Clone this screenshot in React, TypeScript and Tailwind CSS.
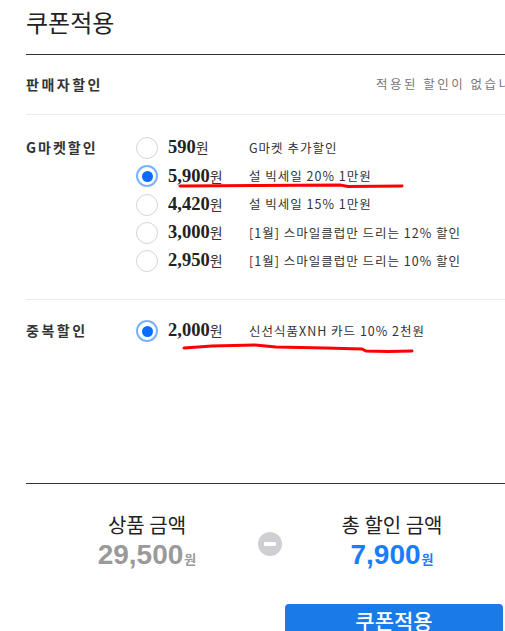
import React from "react";

const KR = { fontFamily: '"Noto Sans CJK KR", "Noto Sans", sans-serif' };

type Row = { amount: string; desc: string; checked?: boolean };

const gmarket: Row[] = [
  { amount: "590", desc: "G마켓 추가할인" },
  { amount: "5,900", desc: "설 빅세일 20% 1만원", checked: true },
  { amount: "4,420", desc: "설 빅세일 15% 1만원" },
  { amount: "3,000", desc: "[1월] 스마일클럽만 드리는 12% 할인" },
  { amount: "2,950", desc: "[1월] 스마일클럽만 드리는 10% 할인" },
];

function Radio({ checked }: { checked?: boolean }) {
  if (checked) {
    return (
      <span className="w-[22px] h-[22px] rounded-full border-[2px] border-[#7ab2ff] bg-white flex items-center justify-center shrink-0">
        <span className="w-[11px] h-[11px] rounded-full bg-[#0a6cff]" />
      </span>
    );
  }
  return <span className="w-[22px] h-[22px] rounded-full border border-[#d4d4d4] bg-white shrink-0" />;
}

function OptionRow({ r }: { r: Row }) {
  return (
    <div className="h-[28.25px] flex items-center whitespace-nowrap">
      <Radio checked={r.checked} />
      <div className="w-[81px] ml-[10px] flex items-baseline shrink-0">
        <span className="text-[18.5px] font-bold text-[#222]" style={{ fontFamily: '"Liberation Serif", serif' }}>
          {r.amount}
        </span>
        <span className="text-[14px] text-[#333]" style={KR}>원</span>
      </div>
      <span className="text-[12.5px] text-[#333] tracking-[1px]" style={KR}>{r.desc}</span>
    </div>
  );
}

export default function App() {
  return (
    <div className="w-[505px] h-[631px] overflow-hidden bg-white relative pl-[26px]" style={KR}>
      <div className="h-[55px] border-b border-[#333] flex items-center">
        <h1 className="text-[24px] font-normal text-[#222] -mt-[10px]">쿠폰적용</h1>
      </div>

      <div className="h-[60px] border-b border-[#ececec] flex items-center whitespace-nowrap">
        <div className="w-[350px] shrink-0 text-[14px] font-bold text-[#333] tracking-[2.5px]">판매자할인</div>
        <div className="shrink-0 text-[12.5px] text-[#777] tracking-[2.5px]">적용된 할인이 없습니다</div>
      </div>

      <div className="h-[185px] border-b border-[#ececec] pt-[19px] flex">
        <div className="w-[110px] shrink-0 h-[26px] flex items-center text-[14px] font-bold text-[#333] tracking-[2px]">
          G마켓할인
        </div>
        <div className="flex flex-col">
          {gmarket.map((r) => (
            <OptionRow key={r.amount} r={r} />
          ))}
        </div>
      </div>

      <div className="h-[184px] border-b border-[#333] pt-[17px] flex">
        <div className="w-[110px] shrink-0 h-[26px] flex items-center text-[14px] font-bold text-[#333] tracking-[2.5px]">
          중복할인
        </div>
        <div className="flex flex-col">
          <OptionRow r={{ amount: "2,000", desc: "신선식품XNH 카드 10% 2천원", checked: true }} />
        </div>
      </div>

      <div className="pt-[27px] flex items-center">
        <div className="w-[232px] pl-[10px] shrink-0 flex flex-col items-center">
          <div className="text-[20px] leading-[28px] text-[#222]">상품 금액</div>
          <div className="flex items-baseline leading-[32px]">
            <span className="text-[28px] font-bold text-[#9a9a9a]" style={{ fontFamily: '"Liberation Sans", Arial, sans-serif' }}>29,500</span>
            <span className="text-[13px] font-bold text-[#9a9a9a] ml-[1px]">원</span>
          </div>
        </div>
        <div className="w-[24px] h-[24px] rounded-full bg-[#cfcfd3] flex items-center justify-center shrink-0 mt-[2px]">
          <span className="w-[12px] h-[4px] bg-white rounded-[1px]" />
        </div>
        <div className="w-[220px] shrink-0 flex flex-col items-center">
          <div className="text-[20px] leading-[28px] text-[#222]">총 할인 금액</div>
          <div className="flex items-baseline leading-[32px]">
            <span className="text-[28px] font-bold text-[#1a7cff]" style={{ fontFamily: '"Liberation Sans", Arial, sans-serif' }}>7,900</span>
            <span className="text-[13px] font-bold text-[#1a7cff] ml-[1px]">원</span>
          </div>
        </div>
      </div>

      <div className="flex justify-end pr-[2px] mt-[29px]">
        <button className="w-[218px] h-[44px] rounded-[4px] bg-[#1a7be8] text-white text-[21px] font-medium flex justify-center leading-[32px]">
          쿠폰적용
        </button>
      </div>

      <svg className="absolute left-0 top-0 pointer-events-none" width="505" height="631" viewBox="0 0 505 631">
        <path
          d="M180 186 L260 185.5 L340 185 L348 186.5 L402 186"
          stroke="#ff0000"
          strokeWidth="3"
          fill="none"
          strokeLinecap="round"
        />
        <path
          d="M184 348 L212 346 L255 345 L276 347 L325 348 L362 349 L366 351 L388 351.5 L412 351"
          stroke="#ff0000"
          strokeWidth="3"
          fill="none"
          strokeLinecap="round"
        />
      </svg>
    </div>
  );
}
